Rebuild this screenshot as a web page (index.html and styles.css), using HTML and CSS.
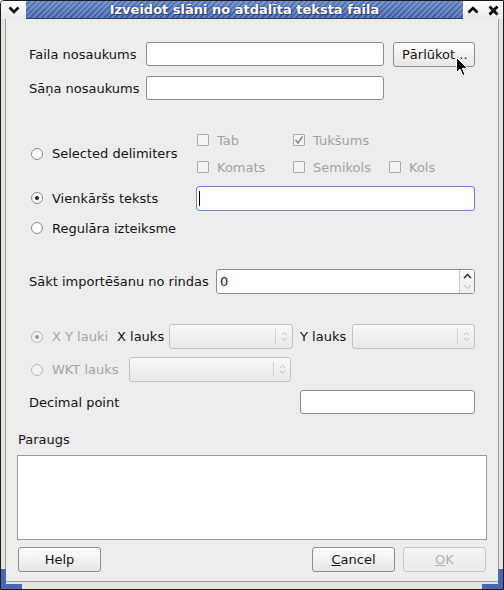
FILE: index.html
```html
<!DOCTYPE html>
<html lang="lv">
<head>
  <meta charset="UTF-8">
  <title>Izveidot slāni no atdalīta teksta faila</title>
  <link rel="stylesheet" href="styles.css">
</head>
<body>
  <div class="window">
    <!-- Window decoration -->
    <div class="titlebar">
      <div class="tb-btn tb-menu">
        <svg width="12" height="8" viewBox="0 0 12 8"><polyline points="1.5,1.5 6,6 10.5,1.5" fill="none" stroke="#000" stroke-width="2.6"/></svg>
      </div>
      <div class="title">Izveidot slāni no atdalīta teksta faila</div>
      <div class="tb-btn tb-max">
        <svg width="12" height="8" viewBox="0 0 12 8"><polyline points="1.5,6.5 6,2 10.5,6.5" fill="none" stroke="#000" stroke-width="2.6"/></svg>
      </div>
      <div class="tb-btn tb-close">
        <svg width="11" height="11" viewBox="0 0 11 11"><path d="M1.5 1.5 L9.5 9.5 M9.5 1.5 L1.5 9.5" stroke="#000" stroke-width="2.8"/></svg>
      </div>
    </div>

    <div class="client">
      <div class="form">
        <!-- File and layer name -->
        <div class="row row-file">
          <span class="lbl">Faila nosaukums</span>
          <div class="field"></div>
          <div class="btn browse">Pārlūkot...
            <svg class="pointer" width="13" height="20" viewBox="0 0 13 20"><path d="M0.5 0.5 L0.5 15.5 L4 12 L6.8 18.5 L9 17.5 L6.3 11.3 L11.3 11.3 Z" fill="#000" stroke="#fff" stroke-width="1"/></svg>
          </div>
        </div>
        <div class="row row-layer">
          <span class="lbl">Sāņa nosaukums</span>
          <div class="field"></div>
        </div>

        <!-- Delimiters -->
        <div class="delims">
          <label class="radio span2"><span class="dot"></span>Selected delimiters</label>
          <label class="check off"><span class="box"></span>Tab</label>
          <label class="check off"><span class="box"><svg width="10" height="10" viewBox="0 0 10 10"><polyline points="1.5,5 4,8 8.5,1.5" fill="none" stroke="#8a8a8a" stroke-width="1.5"/></svg></span>Tukšums</label>
          <span></span>
          <label class="check off"><span class="box"></span>Komats</label>
          <label class="check off"><span class="box"></span>Semikols</label>
          <label class="check off"><span class="box"></span>Kols</label>
        </div>
        <div class="row row-plain">
          <label class="radio"><span class="dot on"></span>Vienkāršs teksts</label>
          <div class="field focus"><span class="caret"></span></div>
        </div>
        <div class="row row-regex">
          <label class="radio"><span class="dot"></span>Regulāra izteiksme</label>
        </div>

        <!-- Skip lines -->
        <div class="row row-start">
          <span class="lbl">Sākt importēšanu no rindas</span>
          <div class="field spin">
            <span class="val">0</span>
            <span class="spin-btns">
              <svg width="9" height="6" viewBox="0 0 9 6"><polyline points="1,5 4.5,1.5 8,5" fill="none" stroke="#222" stroke-width="1.4"/></svg>
              <svg width="9" height="6" viewBox="0 0 9 6"><polyline points="1,1 4.5,4.5 8,1" fill="none" stroke="#b8b8b8" stroke-width="1"/></svg>
            </span>
          </div>
        </div>

        <!-- Geometry -->
        <div class="row row-xy">
          <label class="radio off"><span class="dot on"></span>X Y lauki</label>
          <span class="lbl lbl-x">X lauks</span>
          <div class="combo cx"><span class="arrows"><svg width="7" height="11" viewBox="0 0 7 11"><path d="M1 4 L3.5 1.5 L6 4 M1 7 L3.5 9.5 L6 7" fill="none" stroke="#bdbdbd" stroke-width="1"/></svg></span></div>
          <span class="lbl lbl-y">Y lauks</span>
          <div class="combo cy"><span class="arrows"><svg width="7" height="11" viewBox="0 0 7 11"><path d="M1 4 L3.5 1.5 L6 4 M1 7 L3.5 9.5 L6 7" fill="none" stroke="#bdbdbd" stroke-width="1"/></svg></span></div>
        </div>
        <div class="row row-wkt">
          <label class="radio off"><span class="dot"></span>WKT lauks</label>
          <div class="combo cw"><span class="arrows"><svg width="7" height="11" viewBox="0 0 7 11"><path d="M1 4 L3.5 1.5 L6 4 M1 7 L3.5 9.5 L6 7" fill="none" stroke="#bdbdbd" stroke-width="1"/></svg></span></div>
        </div>
        <div class="row row-dec">
          <span class="lbl">Decimal point</span>
          <div class="field dec"></div>
        </div>
      </div>

      <div class="sample-lbl">Paraugs</div>
      <div class="sample"></div>

      <div class="buttons">
        <div class="btn">Help</div>
        <div class="spacer"></div>
        <div class="btn"><u>C</u>ancel</div>
        <div class="btn disabled"><u>O</u>K</div>
      </div>
    </div>
  </div>
</body>
</html>
```

FILE: styles.css
```css
/* Base */
body {
  margin: 0;
  font-family: "DejaVu Sans", sans-serif;
  font-size: 13px;
  color: #141414;
}
.window {
  position: relative;
  width: 504px;
  height: 590px;
  box-sizing: border-box;
  border: 1px solid #1c1c1c;
  border-top-left-radius: 4px;
  background: #e4e3e0;
  display: flex;
  flex-direction: column;
}
/* resize corner highlights */
.window::before,
.window::after {
  content: "";
  position: absolute;
  bottom: 0;
  width: 21px;
  height: 20px;
  border-bottom: 5px solid #4a67b3;
  box-sizing: border-box;
}
.window::before {
  left: 0;
  border-left: 5px solid #4a67b3;
}
.window::after {
  right: 0;
  border-right: 5px solid #4a67b3;
}

/* Title bar */
.titlebar {
  display: flex;
  height: 18px;
  flex: none;
}
.tb-btn {
  display: flex;
  align-items: center;
  justify-content: center;
  background: linear-gradient(#ffffff, #e9e8e5);
  width: 20px;
}
.tb-menu {
  width: 25px;
  border-top-left-radius: 3px;
}
.title {
  flex: 1;
  text-align: center;
  color: #fff;
  font-weight: bold;
  font-size: 13px;
  line-height: 17px;
  text-shadow: 0 0 2px #2a3f78, 1px 1px 0 #2a3f78;
  border-bottom: 1px solid #243a75;
  background:
    repeating-linear-gradient(135deg, rgba(255,255,255,0.22) 0 2px, rgba(255,255,255,0) 2px 4px),
    linear-gradient(#5b7cc0, #3c5ca6);
}

/* Dialog body */
.client {
  flex: 1;
  margin: 0 4px 7px;
  border: 1px solid #9c9c9c;
  border-top: none;
  background: #ededed;
  padding: 22px 11px 0;
}
.form {
  padding: 0 12px;
}
.row {
  display: flex;
  align-items: center;
}
.lbl {
  white-space: nowrap;
}
.field {
  box-sizing: border-box;
  height: 24px;
  background: #fff;
  border: 1px solid #8c8c8c;
  border-radius: 3px;
  position: relative;
}
.btn {
  box-sizing: border-box;
  height: 25px;
  width: 82px;
  border: 1px solid #8e8e8e;
  border-radius: 3px;
  background: linear-gradient(#fdfdfd, #e6e6e4);
  display: flex;
  align-items: center;
  justify-content: center;
  position: relative;
}
.btn.disabled {
  color: #b4b4b4;
  border-color: #c6c6c6;
  background: linear-gradient(#f4f4f4, #eaeaea);
}

.row-file {
  height: 26px;
}
.row-file .lbl { width: 117px; }
.row-file .field { width: 238px; }
.browse {
  margin-left: 9px;
  justify-content: flex-start;
  padding-left: 8px;
}
.pointer {
  position: absolute;
  left: 62px;
  top: 14px;
}
.row-layer {
  margin-top: 9px;
  height: 24px;
}
.row-layer .lbl { width: 117px; }
.row-layer .field { width: 238px; }

/* Radio buttons and check boxes */
.radio,
.check {
  display: flex;
  align-items: center;
  white-space: nowrap;
}
.dot {
  box-sizing: border-box;
  width: 12px;
  height: 12px;
  margin: 0 9px 0 2px;
  border-radius: 50%;
  border: 1px solid #8a8a8a;
  background: #fff;
  display: flex;
  align-items: center;
  justify-content: center;
}
.dot.on::after {
  content: "";
  width: 4px;
  height: 4px;
  border-radius: 50%;
  background: #222;
}
.radio.off {
  color: #a6a6a6;
}
.radio.off .dot {
  border-color: #b6b6b6;
  background: #f2f2f2;
}
.radio.off .dot.on::after {
  background: #9a9a9a;
}
.check.off {
  color: #a3a3a3;
}
.box {
  box-sizing: border-box;
  width: 12px;
  height: 12px;
  margin: 0 8px 0 1px;
  border: 1px solid #ababab;
  border-radius: 1px;
  background: #f3f3f3;
  display: flex;
  align-items: center;
  justify-content: center;
}

.delims {
  margin-top: 29px;
  display: grid;
  grid-template-columns: 167px 96px 96px 1fr;
  grid-template-rows: 22px 22px;
  row-gap: 5px;
  align-items: center;
}
.span2 {
  grid-row: 1 / span 2;
}
.row-plain {
  margin-top: 7px;
  height: 26px;
}
.row-plain .radio { width: 167px; }
.field.focus {
  flex: 1;
  height: 25px;
  border-color: #6786c2;
}
.caret {
  position: absolute;
  left: 2px;
  top: 4px;
  width: 1px;
  height: 15px;
  background: #000;
}
.row-regex {
  margin-top: 6px;
  height: 22px;
}

.row-start {
  margin-top: 30px;
  height: 25px;
}
.row-start .lbl { width: 187px; }
.spin {
  flex: 1;
  height: 25px;
  display: flex;
  align-items: center;
}
.val {
  flex: 1;
  padding-left: 3px;
}
.spin-btns {
  width: 14px;
  height: 100%;
  border-left: 1px solid #c8c8c8;
  display: flex;
  flex-direction: column;
  align-items: center;
  justify-content: space-around;
  background: linear-gradient(#fafafa, #ededed);
}

/* Disabled combo boxes */
.combo {
  box-sizing: border-box;
  height: 25px;
  border: 1px solid #c2c2c2;
  border-radius: 3px;
  background: linear-gradient(#f7f7f7, #e9e9e9);
  display: flex;
  justify-content: flex-end;
  align-items: center;
}
.arrows {
  width: 16px;
  height: 15px;
  border-left: 1px solid #d0d0d0;
  display: flex;
  align-items: center;
  justify-content: center;
}
.row-xy {
  margin-top: 30px;
  height: 25px;
}
.row-xy .radio { width: 88px; }
.lbl-x { width: 52px; }
.cx { width: 124px; }
.lbl-y { width: 52px; margin-left: 7px; }
.cy { width: 123px; }
.row-wkt {
  margin-top: 8px;
  height: 25px;
}
.row-wkt .radio { width: 100px; }
.cw { width: 162px; }
.row-dec {
  margin-top: 8px;
  height: 24px;
}
.row-dec .lbl { width: 271px; }
.field.dec { flex: 1; }

/* Preview */
.sample-lbl {
  margin-top: 18px;
  height: 16px;
  line-height: 16px;
  padding-left: 1px;
}
.sample {
  margin-top: 7px;
  height: 85px;
  box-sizing: border-box;
  border: 1px solid #9a9a9a;
  background: #fff;
}

.buttons {
  margin-top: 7px;
  padding: 0 1px;
  display: flex;
  gap: 8px;
}
.buttons .btn { width: 83px; }
.spacer { flex: 1; }
```
